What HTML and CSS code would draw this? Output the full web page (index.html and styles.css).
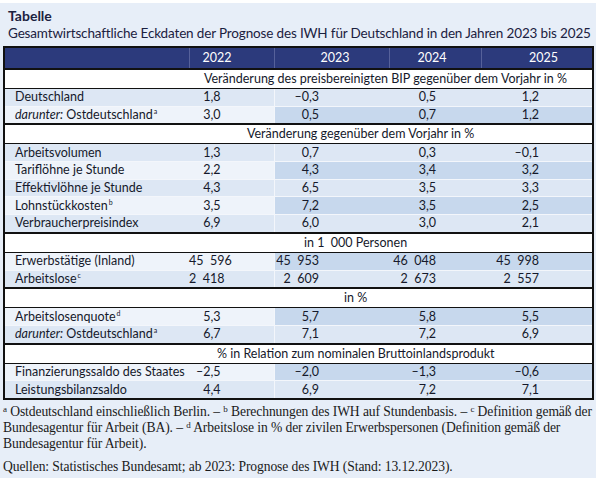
FILE: index.html
```html
<!DOCTYPE html>
<html lang="de">
<head>
<meta charset="utf-8">
<link rel="stylesheet" href="styles.css">
</head>
<body>
<div class="page">
  <div class="head">
    <div class="kicker">Tabelle</div>
    <div class="title">Gesamtwirtschaftliche Eckdaten der Prognose des IWH für Deutschland in den Jahren 2023 bis 2025</div>
  </div>
  <table class="data">
    <colgroup>
      <col class="c-label"><col class="c-22"><col class="c-23"><col class="c-24"><col class="c-25">
    </colgroup>
    <thead>
      <tr class="yr">
        <th></th><th class="h22">2022</th><th class="h23">2023</th><th class="h24">2024</th><th class="h25">2025</th>
      </tr>
    </thead>
    <tbody>
      <tr class="sec"><td colspan="5"><span class="s1">Veränderung des preisbereinigten BIP gegenüber dem Vorjahr in %</span></td></tr>
      <tr class="odd"><td>Deutschland</td><td>1,8</td><td>–0,3</td><td>0,5</td><td>1,2</td></tr>
      <tr class="even"><td><i>darunter:</i> Ostdeutschland<sup>a</sup></td><td>3,0</td><td>0,5</td><td>0,7</td><td>1,2</td></tr>
      <tr class="sec"><td colspan="5"><span class="s2">Veränderung gegenüber dem Vorjahr in %</span></td></tr>
      <tr class="odd"><td>Arbeitsvolumen</td><td>1,3</td><td>0,7</td><td>0,3</td><td>–0,1</td></tr>
      <tr class="even"><td>Tariflöhne je Stunde</td><td>2,2</td><td>4,3</td><td>3,4</td><td>3,2</td></tr>
      <tr class="odd"><td>Effektivlöhne je Stunde</td><td>4,3</td><td>6,5</td><td>3,5</td><td>3,3</td></tr>
      <tr class="even"><td>Lohnstückkosten<sup>b</sup></td><td>3,5</td><td>7,2</td><td>3,5</td><td>2,5</td></tr>
      <tr class="odd"><td>Verbraucherpreisindex</td><td>6,9</td><td>6,0</td><td>3,0</td><td>2,1</td></tr>
      <tr class="sec"><td colspan="5"><span class="s3">in 1&nbsp;&nbsp;000 Personen</span></td></tr>
      <tr class="even"><td>Erwerbstätige (Inland)</td><td>45&nbsp;&nbsp;596</td><td>45&nbsp;&nbsp;953</td><td>46&nbsp;&nbsp;048</td><td>45&nbsp;&nbsp;998</td></tr>
      <tr class="odd"><td>Arbeitslose<sup>c</sup></td><td>2&nbsp;&nbsp;418</td><td>2&nbsp;&nbsp;609</td><td>2&nbsp;&nbsp;673</td><td>2&nbsp;&nbsp;557</td></tr>
      <tr class="sec"><td colspan="5"><span class="s4">in %</span></td></tr>
      <tr class="even"><td>Arbeitslosenquote<sup>d</sup></td><td>5,3</td><td>5,7</td><td>5,8</td><td>5,5</td></tr>
      <tr class="odd"><td><i>darunter:</i> Ostdeutschland<sup>a</sup></td><td>6,7</td><td>7,1</td><td>7,2</td><td>6,9</td></tr>
      <tr class="sec"><td colspan="5"><span class="s5">% in Relation zum nominalen Bruttoinlandsprodukt</span></td></tr>
      <tr class="even"><td>Finanzierungssaldo des Staates</td><td>–2,5</td><td>–2,0</td><td>–1,3</td><td>–0,6</td></tr>
      <tr class="odd last"><td>Leistungsbilanzsaldo</td><td>4,4</td><td>6,9</td><td>7,2</td><td>7,1</td></tr>
    </tbody>
  </table>
  <div class="notes">
    <p><sup>a</sup> Ostdeutschland einschließlich Berlin. – <sup>b</sup> Berechnungen des IWH auf Stundenbasis. – <sup>c</sup> Definition gemäß der<br>Bundesagentur für Arbeit (BA). – <sup>d</sup> Arbeitslose in % der zivilen Erwerbspersonen (Definition gemäß der<br>Bundesagentur für Arbeit).</p>
    <p class="src">Quellen: Statistisches Bundesamt; ab 2023: Prognose des IWH (Stand: 13.12.2023).</p>
  </div>
</div>
</body>
</html>
```
FILE: styles.css
```css
html, body {
  margin: 0;
  padding: 0;
  background: #ffffff;
}
.page {
  width: 596px;
  margin-top: 3px;
  background: #e7eef8;
  padding-bottom: 3px;
  font-family: "Lato", "Noto Sans", sans-serif;
  color: #15192b;
}
.head {
  padding: 4px 0 0 8px;
  height: 39px;
}
.kicker {
  font-weight: 700;
  font-size: 14px;
  line-height: 17px;
  color: #1b2140;
}
.title {
  font-size: 13.5px;
  letter-spacing: -0.15px;
  line-height: 18px;
  color: #1b2140;
  white-space: nowrap;
}
.data {
  margin-left: 3px;
  width: 589px;
  border-collapse: collapse;
  table-layout: fixed;
  border: 2px solid #111;
  font-size: 12.5px;
}
.c-label { width: 185px; }
.c-22 { width: 85px; }
.c-23 { width: 115px; }
.c-24 { width: 92px; }
.c-25 { width: 112px; }
.yr th {
  background: #2c3a7c;
  color: #ffffff;
  font-weight: 400;
  height: 20px;
  padding: 0;
  text-align: right;
  border-left: 1px solid #56619a;
  line-height: 20px;
}
.yr th:first-child { border-left: none; }
.h22 { padding-right: 42px !important; }
.h23 { padding-right: 39px !important; }
.h24 { padding-right: 34px !important; }
.h25 { padding-right: 34px !important; }
.sec td {
  background: #ffffff;
  height: 18px;
  padding: 0;
  border-top: 2px solid #111;
  border-bottom: 1px solid #111;
  line-height: 18px;
  white-space: nowrap;
}
.s1 { padding-left: 189px; }
.s2 { padding-left: 232px; }
.s3 { padding-left: 289px; }
.s4 { padding-left: 329px; }
.s5 { padding-left: 202px; }
.data tbody tr.odd td,
.data tbody tr.even td {
  height: 16.7px;
  padding: 0;
  line-height: 16px;
  text-align: right;
  white-space: nowrap;
  border-top: 1px solid #f3f6fb;
}
.data tbody tr td:first-child {
  text-align: left;
  padding-left: 10px;
}
.data tbody tr td:nth-child(2) { padding-right: 53px; }
.data tbody tr td:nth-child(3) { padding-right: 70px; }
.data tbody tr td:nth-child(4) { padding-right: 45px; }
.data tbody tr td:nth-child(5) { padding-right: 53px; }
tr.odd td { background: #dde7f4; }
tr.even td { background: #eef3fa; }
tr.even td:nth-child(n+3) { background: #c7d8ed; }
tr.odd td:nth-child(3), tr.even td:nth-child(3) { border-left: 1px solid #f3f6fb; }
sup {
  font-size: 7px;
  vertical-align: 5px;
  line-height: 0;
  margin-left: 1px;
}
.notes {
  font-family: "Liberation Serif", "DejaVu Serif", serif;
  font-size: 13.6px;
  letter-spacing: -0.1px;
  line-height: 16px;
  color: #1a1a1a;
  padding: 4px 0 0 3px;
}
.notes p {
  margin: 0;
  white-space: nowrap;
}
.notes p.src {
  margin-top: 7px;
}
.notes sup {
  font-size: 9px;
  vertical-align: 4px;
  margin-left: 0;
}
```
